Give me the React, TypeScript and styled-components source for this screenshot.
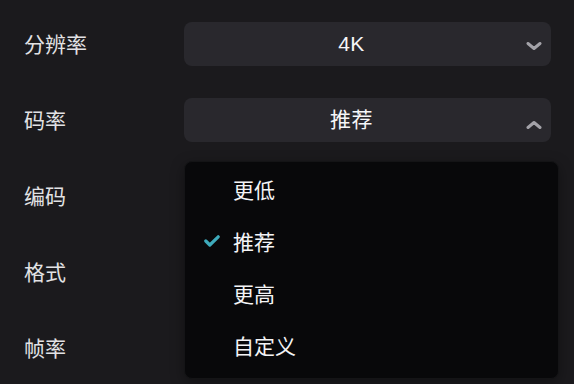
import styled, { createGlobalStyle } from 'styled-components'

const GlobalStyle = createGlobalStyle`
  html, body {
    margin: 0;
    padding: 0;
    background: #1b1a1d;
  }
  body {
    font-family: "Liberation Sans", "Noto Sans CJK SC", sans-serif;
    color: #ececee;
  }
`

interface Option {
  label: string
  selected?: boolean
}

const rows = ['分辨率', '码率', '编码', '格式', '帧率']

const bitrateOptions: Option[] = [
  { label: '更低' },
  { label: '推荐', selected: true },
  { label: '更高' },
  { label: '自定义' },
]

function Chevron({ up }: { up?: boolean }) {
  return (
    <ChevronIcon viewBox="0 0 16 8" $up={up}>
      <polyline points="2,1.5 8,6.5 14,1.5" />
    </ChevronIcon>
  )
}

function Check() {
  return (
    <CheckIcon viewBox="0 0 16 12">
      <polyline points="1.8,6 5.8,10 14.2,1.8" />
    </CheckIcon>
  )
}

export default function App() {
  return (
    <>
      <GlobalStyle />
      <Panel>
        <Row>
          <Label>{rows[0]}</Label>
          <Select>
            <Value>4K</Value>
            <Chevron />
          </Select>
        </Row>
        <Row>
          <Label>{rows[1]}</Label>
          <SelectWrap>
            <Select>
              <Value>推荐</Value>
              <Chevron up />
            </Select>
            <Menu>
              {bitrateOptions.map((opt) => (
                <MenuItem key={opt.label}>
                  <CheckSlot>{opt.selected && <Check />}</CheckSlot>
                  <span>{opt.label}</span>
                </MenuItem>
              ))}
            </Menu>
          </SelectWrap>
        </Row>
        {rows.slice(2).map((name) => (
          <Row key={name}>
            <Label>{name}</Label>
          </Row>
        ))}
      </Panel>
    </>
  )
}

const Panel = styled.div`
  display: flex;
  flex-direction: column;
  gap: 32px;
  padding: 22px 23px 0 24px;
  height: 384px;
  box-sizing: border-box;
  overflow: hidden;
`

const Row = styled.div`
  display: flex;
  align-items: center;
  height: 44px;
  flex-shrink: 0;
`

const Label = styled.div`
  width: 160px;
  flex-shrink: 0;
  padding-bottom: 3px;
  font-family: "Noto Sans CJK SC", sans-serif;
  font-size: 21px;
  line-height: 26px;
  color: #e2e2e5;
`

const SelectWrap = styled.div`
  position: relative;
  flex: 1;
  display: flex;
`

const Select = styled.div`
  position: relative;
  flex: 1;
  height: 44px;
  display: flex;
  align-items: center;
  justify-content: center;
  padding-right: 32px;
  background: #29282d;
  border-radius: 8px;
`

const Value = styled.span`
  font-size: 21px;
  letter-spacing: 0.5px;
  line-height: 26px;
  color: #f6f6f8;
`

const ChevronIcon = styled.svg<{ $up?: boolean }>`
  position: absolute;
  right: 9px;
  top: ${(p) => (p.$up ? '23px' : '20px')};
  width: 16px;
  height: 8px;
  fill: none;
  stroke: #a3a2a8;
  stroke-width: 3;
  stroke-linecap: round;
  stroke-linejoin: round;
  transform: ${(p) => (p.$up ? 'rotate(180deg)' : 'none')};
`

const Menu = styled.div`
  position: absolute;
  top: 63px;
  left: 0;
  right: -8px;
  z-index: 10;
  display: flex;
  flex-direction: column;
  padding: 1px 0 7px;
  background: #08080a;
  border: 1px solid #141416;
  border-radius: 8px;
  box-shadow: 0 4px 14px rgba(0, 0, 0, 0.35);
`

const MenuItem = styled.div`
  display: flex;
  align-items: center;
  height: 52px;
  font-family: "Noto Sans CJK SC", sans-serif;
  font-size: 21px;
  color: #f4f4f6;
`

const CheckSlot = styled.div`
  width: 48px;
  display: flex;
  justify-content: flex-end;
  padding-right: 13px;
  box-sizing: border-box;
`

const CheckIcon = styled.svg`
  width: 16px;
  height: 12px;
  fill: none;
  stroke: #3eaabb;
  stroke-width: 3.2;
  stroke-linecap: round;
  stroke-linejoin: round;
`
